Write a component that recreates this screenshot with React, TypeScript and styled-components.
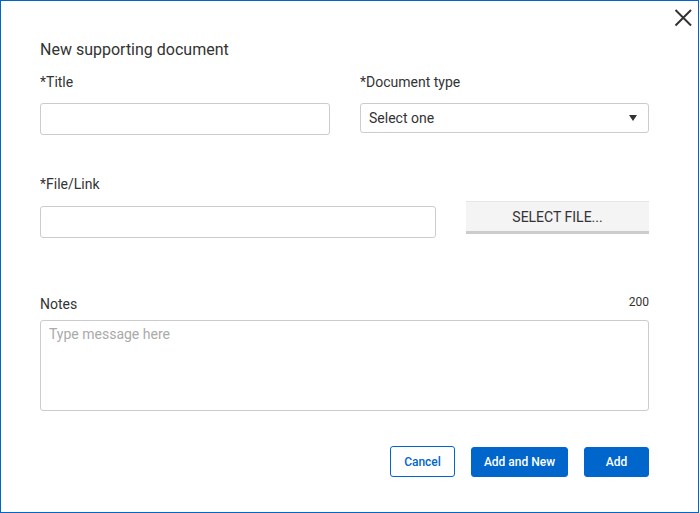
import React from "react";
import styled, { createGlobalStyle } from "styled-components";

const Global = createGlobalStyle`
  html, body { margin: 0; padding: 0; background: #ffffff; }
  body { font-family: Roboto, "Liberation Sans", Arial, sans-serif; color: #333333; }
  * { box-sizing: border-box; }
`;

const Dialog = styled.div`
  position: relative;
  width: 699px;
  height: 513px;
  border: 1px solid #0066cc;
  background: #ffffff;
  padding: 39px 49px 0 39px;
  display: flex;
  flex-direction: column;
`;

const CloseButton = styled.button`
  position: absolute;
  top: 6px;
  right: 4px;
  width: 22px;
  height: 22px;
  padding: 0;
  border: none;
  background: transparent;
  display: flex;
  align-items: center;
  justify-content: center;
  cursor: pointer;
`;

const Heading = styled.h2`
  margin: 0;
  font-size: 16px;
  line-height: 20px;
  font-weight: 400;
  color: #333333;
`;

const Row = styled.div<{ $cols: string; $top: number; $align?: string }>`
  display: grid;
  grid-template-columns: ${(p) => p.$cols};
  column-gap: 30px;
  margin-top: ${(p) => p.$top}px;
  align-items: ${(p) => p.$align || "start"};
`;

const Field = styled.div<{ $top?: number }>`
  display: flex;
  flex-direction: column;
  margin-top: ${(p) => p.$top || 0}px;
`;

const LabelRow = styled.div`
  display: flex;
  justify-content: space-between;
  align-items: center;
  height: 20px;
`;

const Label = styled.label`
  font-size: 14px;
  line-height: 20px;
  color: #333333;
`;

const Counter = styled.span`
  font-size: 12px;
  line-height: 16px;
  color: #333333;
  margin-top: -4px;
`;

const TextInput = styled.input<{ $gap?: number }>`
  margin-top: ${(p) => p.$gap || 11}px;
  height: 32px;
  width: 100%;
  border: 1px solid #cccccc;
  border-radius: 3px;
  font-family: inherit;
  font-size: 14px;
  padding: 0 8px;
  outline: none;
`;

const SelectBox = styled.div`
  margin-top: 11px;
  height: 30px;
  border: 1px solid #cccccc;
  border-radius: 3px;
  display: flex;
  align-items: center;
  justify-content: space-between;
  padding: 0 11px 0 8px;
  font-size: 14px;
  color: #333333;
`;

const Caret = styled.span`
  width: 0;
  height: 0;
  border-left: 4px solid transparent;
  border-right: 4px solid transparent;
  border-top: 6px solid #333333;
`;

const FileButton = styled.button`
  height: 33px;
  width: 100%;
  margin-bottom: 4px;
  background: #f4f4f4;
  border: none;
  border-top: 1px solid #e6e6e6;
  border-bottom: 3px solid #cccccc;
  font-family: inherit;
  font-size: 14px;
  color: #333333;
  padding: 0;
  cursor: pointer;
`;

const NotesArea = styled.textarea`
  margin-top: 6px;
  height: 91px;
  width: 100%;
  resize: none;
  border: 1px solid #cccccc;
  border-radius: 3px;
  font-family: inherit;
  font-size: 14px;
  padding: 5px 8px;
  outline: none;
  &::placeholder { color: #aaaaaa; }
`;

const Actions = styled.div`
  margin-top: 35px;
  display: flex;
  justify-content: flex-end;
  align-items: flex-end;
  gap: 16px;
`;

const ActionButton = styled.button<{ $primary?: boolean; $w: number }>`
  width: ${(p) => p.$w}px;
  height: ${(p) => (p.$primary ? 30 : 31)}px;
  border-radius: 3px;
  font-family: inherit;
  font-size: 12px;
  font-weight: 500;
  padding: 0;
  cursor: pointer;
  border: 1px solid #0066cc;
  background: ${(p) => (p.$primary ? "#0066cc" : "#ffffff")};
  color: ${(p) => (p.$primary ? "#ffffff" : "#0066cc")};
`;

export default function App() {
  return (
    <>
      <Global />
      <Dialog>
        <CloseButton aria-label="Close">
          <svg width="18" height="18" viewBox="0 0 18 18">
            <path d="M1.5 1 L17 16.5 M17 1 L1.5 16.5" stroke="#333333" strokeWidth="2" fill="none" />
          </svg>
        </CloseButton>
        <Heading>New supporting document</Heading>
        <Row $cols="290px 289px" $top={12}>
          <Field>
            <LabelRow>
              <Label>*Title</Label>
            </LabelRow>
            <TextInput />
          </Field>
          <Field>
            <LabelRow>
              <Label>*Document type</Label>
            </LabelRow>
            <SelectBox>
              <span>Select one</span>
              <Caret />
            </SelectBox>
          </Field>
        </Row>
        <Row $cols="396px 183px" $top={39} $align="end">
          <Field>
            <LabelRow>
              <Label>*File/Link</Label>
            </LabelRow>
            <TextInput $gap={12} />
          </Field>
          <FileButton>SELECT FILE...</FileButton>
        </Row>
        <Field $top={56}>
          <LabelRow>
            <Label>Notes</Label>
            <Counter>200</Counter>
          </LabelRow>
          <NotesArea placeholder="Type message here" />
        </Field>
        <Actions>
          <ActionButton $w={65}>Cancel</ActionButton>
          <ActionButton $w={97} $primary>Add and New</ActionButton>
          <ActionButton $w={65} $primary>Add</ActionButton>
        </Actions>
      </Dialog>
    </>
  );
}
